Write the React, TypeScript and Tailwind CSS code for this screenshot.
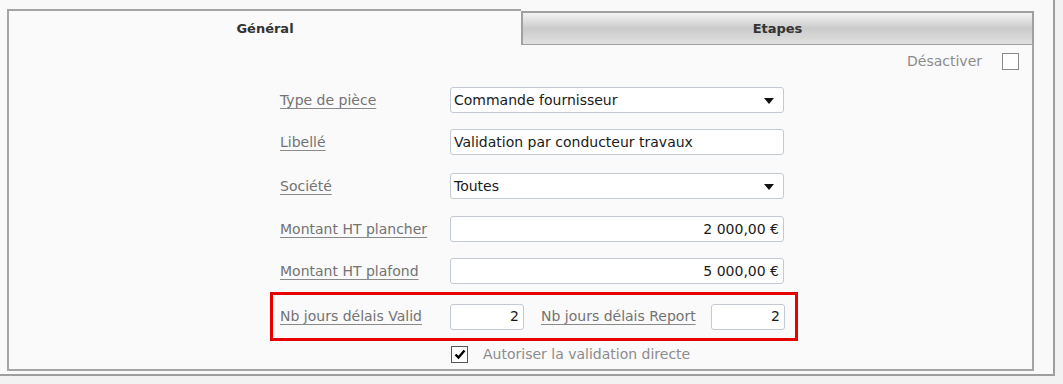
import React from 'react'

const font = { fontFamily: '"DejaVu Sans", Verdana, sans-serif' }

function Caret() {
  return (
    <svg width="10" height="6" viewBox="0 0 10 6" className="absolute right-[9px] top-[10px]">
      <path d="M0 0 L10 0 L5 6 Z" fill="#111" />
    </svg>
  )
}

function Field({ value, select = false, right = false, w = 'w-[334px]' }: { value: string; select?: boolean; right?: boolean; w?: string }) {
  return (
    <div className={`relative h-[26px] ${w} rounded-[3px] border border-[#c3cad3] bg-white flex items-center ${right ? 'justify-end pr-[4px]' : 'pl-[3px]'} text-[14px] text-[#1a1a1a]`}>
      {value}
      {select && <Caret />}
    </div>
  )
}

function Label({ children, w = 'w-[170px]' }: { children: React.ReactNode; w?: string }) {
  return <span className={`${w} shrink-0 text-[14px] text-[#737373] underline underline-offset-[3px] decoration-[#8a8a8a]`}>{children}</span>
}

function Row({ label, children, mt }: { label: string; children: React.ReactNode; mt: string }) {
  return (
    <div className={`flex items-center pl-[10px] ${mt}`}>
      <Label>{label}</Label>
      {children}
    </div>
  )
}

export default function App() {
  return (
    <div className="w-[1063px] h-[384px] bg-[#f2f2f2] overflow-hidden" style={font}>
      <div className="w-[1055px] h-[376px] bg-[#f9f9f9] border-r-2 border-b-2 border-[#9e9e9e] pl-[7px] pt-[9px]">
        <div className="w-[1027px]">
          {/* tabs */}
          <div className="flex items-end h-[36px]">
            <div className="w-[514px] h-[36px] pt-[1px] border-t-2 border-l-2 border-[#a4a4a4] bg-[#fafafa] flex items-center justify-center text-[13px] font-semibold text-[#333]">
              Général
            </div>
            <div className="flex-1 h-[34px] border-2 border-b border-[#a0a0a0] bg-gradient-to-b from-[#f3f3f3] via-[#cbcbcb] to-[#e0e0e0] flex items-center justify-center text-[13px] font-semibold text-[#333]">
              Etapes
            </div>
          </div>
          {/* body */}
          <div className="h-[326px] border-l-2 border-r-2 border-b-2 border-[#a4a4a4] bg-[#fafafa]">
            <div className="flex justify-end items-center pt-[6px] pr-[13px]">
              <span className="text-[14px] text-[#8c8c8c] mr-[20px]">Désactiver</span>
              <span className="w-[17px] h-[17px] border border-[#8a8a8a] bg-white" />
            </div>
            <div className="ml-[261px] w-[528px]">
              <Row label="Type de pièce" mt="mt-[15px]">
                <Field value="Commande fournisseur" select />
              </Row>
              <Row label="Libellé" mt="mt-[16px]">
                <Field value="Validation par conducteur travaux" />
              </Row>
              <Row label="Société" mt="mt-[18px]">
                <Field value="Toutes" select />
              </Row>
              <Row label="Montant HT plancher" mt="mt-[17px]">
                <Field value="2 000,00 €" right />
              </Row>
              <Row label="Montant HT plafond" mt="mt-[16px]">
                <Field value="5 000,00 €" right />
              </Row>
              <div className="mt-[8px] h-[49px] border-[3px] border-[#e60000] flex items-center pl-[7px]">
                <Label>Nb jours délais Valid</Label>
                <Field value="2" right w="w-[74px]" />
                <Label w="w-[170px] ml-[17px]">Nb jours délais Report</Label>
                <Field value="2" right w="w-[74px]" />
              </div>
              <div className="flex items-center mt-[3px] ml-[181px]">
                <span className="w-[17px] h-[17px] border border-[#555] bg-white flex items-center justify-center">
                  <svg width="12" height="11" viewBox="0 0 12 11">
                    <path d="M1.5 5.5 L4.5 8.5 L10.5 1.5" stroke="#000" strokeWidth="2.4" fill="none" />
                  </svg>
                </span>
                <span className="ml-[15px] text-[14px] text-[#8c8c8c]">Autoriser la validation directe</span>
              </div>
            </div>
          </div>
        </div>
      </div>
    </div>
  )
}
